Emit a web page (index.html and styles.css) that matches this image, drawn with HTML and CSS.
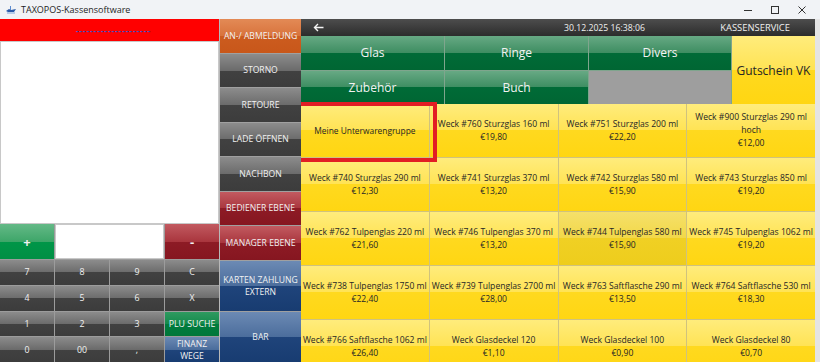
FILE: index.html
```html
<!DOCTYPE html>
<html lang="de">

<head>
    <meta charset="utf-8" />
    <title>TAXOPOS-Kassensoftware</title>
    <link rel="stylesheet" href="styles.css">
</head>

<body>
    <!-- Fensterleiste -->
    <div class="titleBar">
        <svg class="appIcon" width="10" height="8" viewBox="0 0 10 8">
            <path d="M0 5 L3 3 L5 4 L10 3 L8 6 L2 6 Z" fill="#2a5aa8" />
            <path d="M4 0 L5 0 L5 4 L4 4 Z" fill="#5a8ad0" />
            <path d="M1 7 L9 7" stroke="#7fa6dc" stroke-width="1" />
        </svg>
        <span class="appTitle">TAXOPOS-Kassensoftware</span>
        <div class="winControls">
            <span class="winBtn">
                <svg width="10" height="10" viewBox="0 0 10 10"><path d="M1 5.5 H9" stroke="#333" stroke-width="1" /></svg>
            </span>
            <span class="winBtn">
                <svg width="10" height="10" viewBox="0 0 10 10"><rect x="1.5" y="1.5" width="7" height="7" fill="none" stroke="#333" stroke-width="1" /></svg>
            </span>
            <span class="winBtn">
                <svg width="10" height="10" viewBox="0 0 10 10"><path d="M1.5 1.5 L8.5 8.5 M8.5 1.5 L1.5 8.5" stroke="#333" stroke-width="1" /></svg>
            </span>
        </div>
    </div>

    <div class="window">
        <!-- Bon und Zahlenfeld -->
        <div class="leftPanel">
            <div class="receiptHeader"><span class="dashes">---------------------</span></div>
            <div class="receiptList"></div>
            <div class="keypad">
                <div class="btn green plus">+</div>
                <div class="amountInput"></div>
                <div class="btn red minus">-</div>
                <div class="btn gray">7</div>
                <div class="btn gray">8</div>
                <div class="btn gray">9</div>
                <div class="btn gray">C</div>
                <div class="btn gray">4</div>
                <div class="btn gray">5</div>
                <div class="btn gray">6</div>
                <div class="btn gray">X</div>
                <div class="btn gray">1</div>
                <div class="btn gray">2</div>
                <div class="btn gray">3</div>
                <div class="btn pluGreen">PLU SUCHE</div>
                <div class="btn gray">0</div>
                <div class="btn gray">00</div>
                <div class="btn gray">,</div>
                <div class="btn blue finanz">FINANZ<br>WEGE</div>
            </div>
        </div>

        <!-- Funktionstasten -->
        <div class="menuColumn">
            <div class="btn orange menuBtn">AN-/ ABMELDUNG</div>
            <div class="btn gray menuBtn">STORNO</div>
            <div class="btn gray menuBtn">RETOURE</div>
            <div class="btn gray menuBtn">LADE ÖFFNEN</div>
            <div class="btn gray menuBtn">NACHBON</div>
            <div class="btn red menuBtn">BEDIENER EBENE</div>
            <div class="btn red menuBtn">MANAGER EBENE</div>
            <div class="btn blue menuBtn big">KARTEN ZAHLUNG<br>EXTERN</div>
            <div class="btn blue menuBtn big">BAR</div>
        </div>

        <!-- Warengruppen und Artikel -->
        <div class="mainPanel">
            <div class="topBar">
                <span class="backArrow">
                    <svg width="11" height="9" viewBox="0 0 11 9"><path d="M10.5 4.5 H1.5 M5 1 L1.5 4.5 L5 8" fill="none" stroke="#f4f4f4" stroke-width="1.4" /></svg>
                </span>
                <span class="dateTime">30.12.2025 16:38:06</span>
                <span class="userName">KASSENSERVICE</span>
            </div>
            <div class="categories">
                <div class="btn catGreen">Glas</div>
                <div class="btn catGreen">Ringe</div>
                <div class="btn catGreen">Divers</div>
                <div class="btn yellow voucher">Gutschein VK</div>
                <div class="btn catGreen">Zubehör</div>
                <div class="btn catGreen">Buch</div>
                <div class="emptyCat"></div>
            </div>
            <div class="products">
                <div class="btn yellow product subGroup">
                    Meine Unterwarengruppe
                    <div class="highlight"></div>
                </div>
                <div class="btn yellow product">Weck #760 Sturzglas 160 ml<br>€19,80</div>
                <div class="btn yellow product">Weck #751 Sturzglas 200 ml<br>€22,20</div>
                <div class="btn yellow product">Weck #900 Sturzglas 290 ml<br>hoch<br>€12,00</div>
                <div class="btn yellow product">Weck #740 Sturzglas 290 ml<br>€12,30</div>
                <div class="btn yellow product">Weck #741 Sturzglas 370 ml<br>€13,20</div>
                <div class="btn yellow product">Weck #742 Sturzglas 580 ml<br>€15,90</div>
                <div class="btn yellow product">Weck #743 Sturzglas 850 ml<br>€19,20</div>
                <div class="btn yellow product">Weck #762 Tulpenglas 220 ml<br>€21,60</div>
                <div class="btn yellow product">Weck #746 Tulpenglas 370 ml<br>€13,20</div>
                <div class="btn yellow product hovered">Weck #744 Tulpenglas 580 ml<br>€15,90</div>
                <div class="btn yellow product">Weck #745 Tulpenglas 1062 ml<br>€19,20</div>
                <div class="btn yellow product">Weck #738 Tulpenglas 1750 ml<br>€22,40</div>
                <div class="btn yellow product">Weck #739 Tulpenglas 2700 ml<br>€28,00</div>
                <div class="btn yellow product">Weck #763 Saftflasche 290 ml<br>€13,50</div>
                <div class="btn yellow product">Weck #764 Saftflasche 530 ml<br>€18,30</div>
                <div class="btn yellow product">Weck #766 Saftflasche 1062 ml<br>€26,40</div>
                <div class="btn yellow product">Weck Glasdeckel 120<br>€1,10</div>
                <div class="btn yellow product">Weck Glasdeckel 100<br>€0,90</div>
                <div class="btn yellow product">Weck Glasdeckel 80<br>€0,70</div>
            </div>
        </div>
    </div>
</body>

</html>
```

FILE: styles.css
```css
body {
    margin: 0;
    background-color: #e4e4e4;
    font-family: "Open Sans", "Noto Sans", sans-serif;
    overflow: hidden;
}

.titleBar {
    height: 19px;
    display: flex;
    align-items: center;
    background-color: #f1f3f6;
    color: #1e1e1e;
    font-size: 9px;
}

.appIcon {
    margin-left: 6px;
    margin-right: 5px;
}

.winControls {
    margin-left: auto;
    display: flex;
    margin-right: 5px;
}

.winBtn {
    width: 27px;
    display: flex;
    justify-content: center;
}

.window {
    width: 815px;
    height: 343px;
    display: flex;
}

/* Buttons */

.btn {
    display: flex;
    align-items: center;
    justify-content: center;
    text-align: center;
    color: #f2f2f2;
    box-sizing: border-box;
    overflow: hidden;
    white-space: nowrap;
}

.gray {
    background: linear-gradient(#8c8c8c 0%, #6b6b6b 50%, #414141 50%, #3c3c3c 100%);
}

.orange {
    background: linear-gradient(#e38a56 0%, #d8733c 50%, #cc5c1f 50%, #c8571a 100%);
}

.red {
    background: linear-gradient(#c25a60 0%, #a9363e 50%, #8d1b25 50%, #861620 100%);
}

.blue {
    background: linear-gradient(#6c8ab4 0%, #4b6d9c 50%, #1f447b 50%, #183c71 100%);
}

.green {
    background: linear-gradient(#64b987 0%, #3ea669 50%, #009648 50%, #008f44 100%);
}

.pluGreen {
    background: linear-gradient(#2f9a60 0%, #148a4c 50%, #007c3e 50%, #00773a 100%);
}

.catGreen {
    background: linear-gradient(#67a984 0%, #3d8d61 50%, #006b37 50%, #006633 100%);
    font-size: 12px;
}

.yellow {
    background: linear-gradient(#ffec7c 0%, #ffe354 50%, #ffd91f 50%, #ffd612 100%);
    color: #262626;
}

/* Linke Seite */

.leftPanel {
    width: 219px;
    display: flex;
    flex-direction: column;
}

.receiptHeader {
    height: 22px;
    background-color: #ff0000;
    display: flex;
    justify-content: center;
    align-items: center;
}

.dashes {
    color: #3a4fc0;
    font-size: 8px;
    font-weight: bold;
    letter-spacing: 1px;
    margin-left: 8px;
}

.receiptList {
    flex: 1;
    background-color: #ffffff;
    border: 1px solid #c8c8c8;
}

.keypad {
    height: 138px;
    flex-shrink: 0;
    display: grid;
    grid-template-columns: repeat(4, 1fr);
    grid-template-rows: 35px repeat(4, 1fr);
    gap: 1px;
    background-color: #9c9c9c;
    font-size: 8.8px;
}

.plus,
.minus {
    font-size: 13px;
    font-weight: bold;
}

.amountInput {
    grid-column: span 2;
    background-color: #ffffff;
    border: 1px solid #c8c8c8;
}

.finanz {
    font-size: 8.6px;
    line-height: 12px;
}

/* Funktionstasten */

.menuColumn {
    width: 82px;
    display: flex;
    flex-direction: column;
    gap: 1px;
    background-color: #a0a0a0;
    border-left: 1px solid #b8b8b8;
    box-sizing: border-box;
}

.menuBtn {
    flex: 1;
    font-size: 8.6px;
    line-height: 12px;
}

.menuBtn.big {
    flex: 1.5;
}

/* Hauptbereich */

.mainPanel {
    flex: 1;
    display: flex;
    flex-direction: column;
    overflow: hidden;
}

.topBar {
    height: 17px;
    flex-shrink: 0;
    display: grid;
    grid-template-columns: 263px 1fr auto;
    align-items: center;
    padding-right: 25px;
    background: linear-gradient(#4d4d4d, #2c2c2c);
    color: #f0f0f0;
    font-size: 8.7px;
}

.backArrow {
    display: flex;
    padding-left: 12px;
}

.userName {
    font-size: 9.4px;
}

.categories {
    height: 68px;
    flex-shrink: 0;
    display: grid;
    grid-template-columns: 143px 143px 142px 1fr;
    grid-template-rows: 1fr 1fr;
    gap: 1px;
    background-color: #7fa58d;
}

.voucher {
    grid-row: span 2;
    font-size: 12px;
}

.emptyCat {
    background-color: #9e9e9e;
}

.products {
    flex: 1;
    min-height: 0;
    display: grid;
    grid-template-columns: repeat(4, 1fr);
    grid-auto-rows: 53px;
    gap: 1px;
    background-color: #cfc27e;
}

.product {
    font-size: 8.6px;
    line-height: 13px;
}

.product.hovered {
    background: linear-gradient(#f5e06a 0%, #f2d848 50%, #f0d024 50%, #eecd1c 100%);
}

.subGroup {
    position: relative;
    overflow: visible;
    font-size: 8.4px;
}

.highlight {
    position: absolute;
    left: -4px;
    top: -2px;
    right: -8px;
    bottom: -5px;
    border: 4px solid #e21d24;
    z-index: 2;
}
```
